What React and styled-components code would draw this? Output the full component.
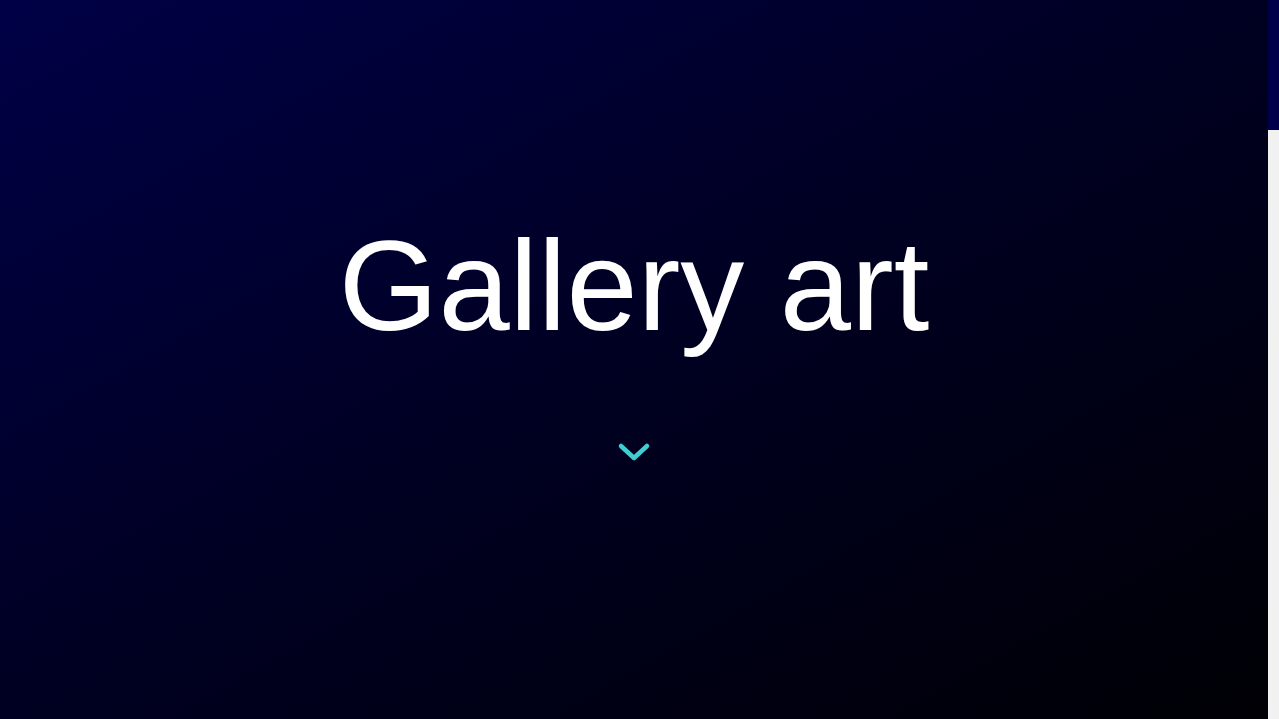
import React from "react";
import styled, { createGlobalStyle } from "styled-components";

const GlobalStyle = createGlobalStyle`
  html, body {
    margin: 0;
    padding: 0;
    height: 100%;
    overflow: hidden;
    background: #000000;
    font-family: "Liberation Sans", Arial, sans-serif;
  }
`;

export default function App() {
  return (
    <>
      <GlobalStyle />
      <Page>
        <Content>
          <Hero>
            <Title>Gallery art</Title>
            <ScrollDown href="#gallery" aria-label="Scroll down">
              <svg width="34" height="22" viewBox="0 0 34 22" fill="none">
                <polyline points="4,5 17,17 30,5" stroke="#3ecfd2" strokeWidth="4.5" strokeLinecap="round" strokeLinejoin="round" />
              </svg>
            </ScrollDown>
          </Hero>
          <Gallery id="gallery" />
        </Content>
        <ScrollTrack>
          <ScrollThumb />
        </ScrollTrack>
      </Page>
    </>
  );
}

const Page = styled.div`
  display: grid;
  grid-template-columns: 1fr 11px;
  height: 100vh;
`;

const Content = styled.main`
  overflow: hidden;
`;

const ScrollTrack = styled.div`
  background: #f1f1f1;
`;

const ScrollThumb = styled.div`
  height: 130px;
  background: #00004a;
`;

const Hero = styled.section`
  height: 100vh;
  display: flex;
  flex-direction: column;
  align-items: center;
  padding-top: 212px;
  box-sizing: border-box;
  background: linear-gradient(to bottom right, #000047 0%, #000022 50%, #000005 100%);
`;

const Title = styled.h1`
  margin: 0;
  color: #ffffff;
  font-family: "Liberation Sans", Arial, sans-serif;
  font-weight: 400;
  font-size: 128px;
  line-height: 147px;
`;

const ScrollDown = styled.a`
  display: flex;
  margin-top: 82px;
  text-decoration: none;
`;

const Gallery = styled.section`
  height: 3258px;
  background: #000000;
`;
